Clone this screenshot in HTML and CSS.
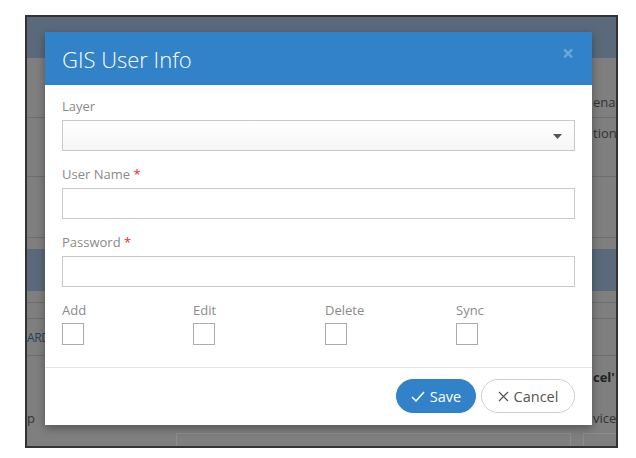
FILE: index.html
```html
<!DOCTYPE html>
<html>
<head>
<meta charset="utf-8">
<title>GIS User Info</title>
<link rel="stylesheet" href="styles.css">
</head>
<body>
<div class="frame">
  <div class="bg">
    <div class="band band-top"></div>
    <div class="row row-a"><span class="cell-l"></span><span class="cell-m"></span><span class="cell-r">ena</span></div>
    <div class="row row-b"><span class="cell-l"></span><span class="cell-m"></span><span class="cell-r">tion</span></div>
    <div class="row row-c"><span class="cell-l"></span><span class="cell-m"></span><span class="cell-r"></span></div>
    <div class="spacer"></div>
    <div class="band band-mid"></div>
    <div class="row row-d"></div>
    <div class="row row-e"></div>
    <div class="row row-f"><span class="cell-l"><span class="blue">ARD</span></span><span class="cell-m"></span><span class="cell-r"></span></div>
    <div class="row row-g">
      <div class="cell-l stack"><span></span><span>p</span></div>
      <span class="cell-m"></span>
      <div class="cell-r stack"><b>cel'</b><span>vice</span></div>
    </div>
    <div class="row row-h"><span class="cell-l"></span><span class="box box-a"></span><span class="box box-b"></span></div>
  </div>

  <div class="modal">
    <div class="modal-header">
      <h4 class="modal-title">GIS User Info</h4>
      <span class="close">×</span>
    </div>
    <div class="modal-body">
      <div class="form-group">
        <label class="lbl">Layer</label>
        <div class="select">
          <svg class="caret" width="9" height="5" viewBox="0 0 9 5"><path d="M0 0 H9 L4.5 5 Z" fill="#555"/></svg>
        </div>
      </div>
      <div class="form-group">
        <label class="lbl">User Name <span class="req">*</span></label>
        <div class="input"></div>
      </div>
      <div class="form-group">
        <label class="lbl">Password <span class="req">*</span></label>
        <div class="input"></div>
      </div>
      <div class="checks">
        <div class="check"><label class="lbl">Add</label><span class="box-check"></span></div>
        <div class="check"><label class="lbl">Edit</label><span class="box-check"></span></div>
        <div class="check"><label class="lbl">Delete</label><span class="box-check"></span></div>
        <div class="check"><label class="lbl">Sync</label><span class="box-check"></span></div>
      </div>
    </div>
    <div class="modal-footer">
      <button class="btn btn-save">
        <svg width="14" height="11" viewBox="0 0 14 11"><path d="M1 6 L5 10 L13 1" fill="none" stroke="#fff" stroke-width="1.5"/></svg>
        <span>Save</span>
      </button>
      <button class="btn btn-cancel">
        <svg width="11" height="11" viewBox="0 0 11 11"><path d="M1 1 L10 10 M10 1 L1 10" fill="none" stroke="#555" stroke-width="1.2"/></svg>
        <span>Cancel</span>
      </button>
    </div>
  </div>
</div>
</body>
</html>
```
FILE: styles.css
```css
* { box-sizing: border-box; }
html, body { margin: 0; padding: 0; background: #fff; }
body { font-family: "Open Sans", "Noto Sans", sans-serif; }

.frame {
  margin: 15px 0 0 25px;
  width: 593px;
  height: 433px;
  border: 2px solid #333;
  position: relative;
  overflow: hidden;
  background: #7f7f7f;
}

.bg { display: flex; flex-direction: column; font-size: 13px; color: #333; }
.band { background: #5b6a7a; }
.band-top { height: 41px; }
.band-mid { height: 42px; }
.spacer { height: 11px; }

.row {
  display: grid;
  grid-template-columns: 21px 1fr 24px;
  border-bottom: 1px solid #6e6e6e;
}
.cell-l { display: flex; justify-content: flex-end; overflow: hidden; white-space: nowrap; }
.cell-r { overflow: hidden; white-space: nowrap; padding-left: 1px; }
.row-a { height: 60px; align-items: end; padding-bottom: 6px; }
.row-b { height: 59px; align-items: start; padding-top: 6px; }
.row-c { height: 61px; }
.row-d { height: 12px; }
.row-e { height: 16px; }
.row-f { height: 37px; align-items: center; }
.blue { color: #24405e; font-size: 12px; letter-spacing: -0.4px; }
.row-f .cell-l { justify-content: flex-start; overflow: visible; }
.row-g { height: 77px; border-bottom: none; }
.stack { display: flex; flex-direction: column; justify-content: flex-end; padding-bottom: 6px; gap: 23px; }
.row-g .cell-l.stack { align-items: flex-start; }
.row-g b { font-weight: 700; color: #222; }
.row-h {
  height: 20px;
  border-bottom: none;
  grid-template-columns: 149px 395px 1fr;
}
.box { border: 1px solid #8c8c8c; border-bottom: none; }
.box-b { margin-left: 12px; margin-right: -2px; }

.modal {
  position: absolute;
  left: 18px;
  top: 15px;
  width: 547px;
  background: #fff;
  box-shadow: 0 3px 9px rgba(0, 0, 0, 0.35);
}
.modal-header {
  height: 53px;
  background: #3182c8;
  display: flex;
  align-items: center;
  justify-content: space-between;
  padding: 0 18px 0 17px;
}
.modal-title {
  margin: 0;
  color: #fff;
  font-size: 22px;
  font-weight: 300;
  line-height: 1;
}
.close {
  color: #6fa6da;
  font-size: 21px;
  font-weight: 700;
  line-height: 1;
  margin-top: -10px;
}

.modal-body { padding: 13px 17px 22px; }
.lbl {
  display: block;
  font-size: 13px;
  line-height: 17px;
  color: #8a8a8a;
  margin-bottom: 5px;
}
.req { color: #f0262c; }
.form-group { margin-bottom: 15px; }
.input, .select {
  height: 31px;
  border: 1px solid #c9c9c9;
  background: #fff;
}
.select {
  background: linear-gradient(#ffffff, #f6f6f6);
  display: flex;
  align-items: center;
  justify-content: flex-end;
  padding-right: 12px;
}
.caret { display: block; margin-top: 2px; }

.checks {
  display: grid;
  grid-template-columns: 131px 132px 131px 1fr;
}
.check .lbl { margin-bottom: 4px; }
.box-check {
  display: block;
  width: 22px;
  height: 22px;
  border: 1px solid #ababab;
  background: #fff;
}

.modal-footer {
  border-top: 1px solid #e3e3e3;
  padding: 11px 17px 12px;
  display: flex;
  justify-content: flex-end;
  gap: 5px;
}
.btn {
  height: 34px;
  border-radius: 17px;
  font-family: "Open Sans", "Noto Sans", sans-serif;
  font-size: 14.5px;
  display: inline-flex;
  align-items: center;
  justify-content: center;
  gap: 5px;
  padding: 0;
  cursor: pointer;
}
.btn svg { display: block; }
.btn-save {
  width: 80px;
  background: #3182c8;
  border: 1px solid #3182c8;
  color: #fff;
}
.btn-cancel {
  width: 94px;
  background: #fff;
  border: 1px solid #cfcfcf;
  color: #555;
}
```
